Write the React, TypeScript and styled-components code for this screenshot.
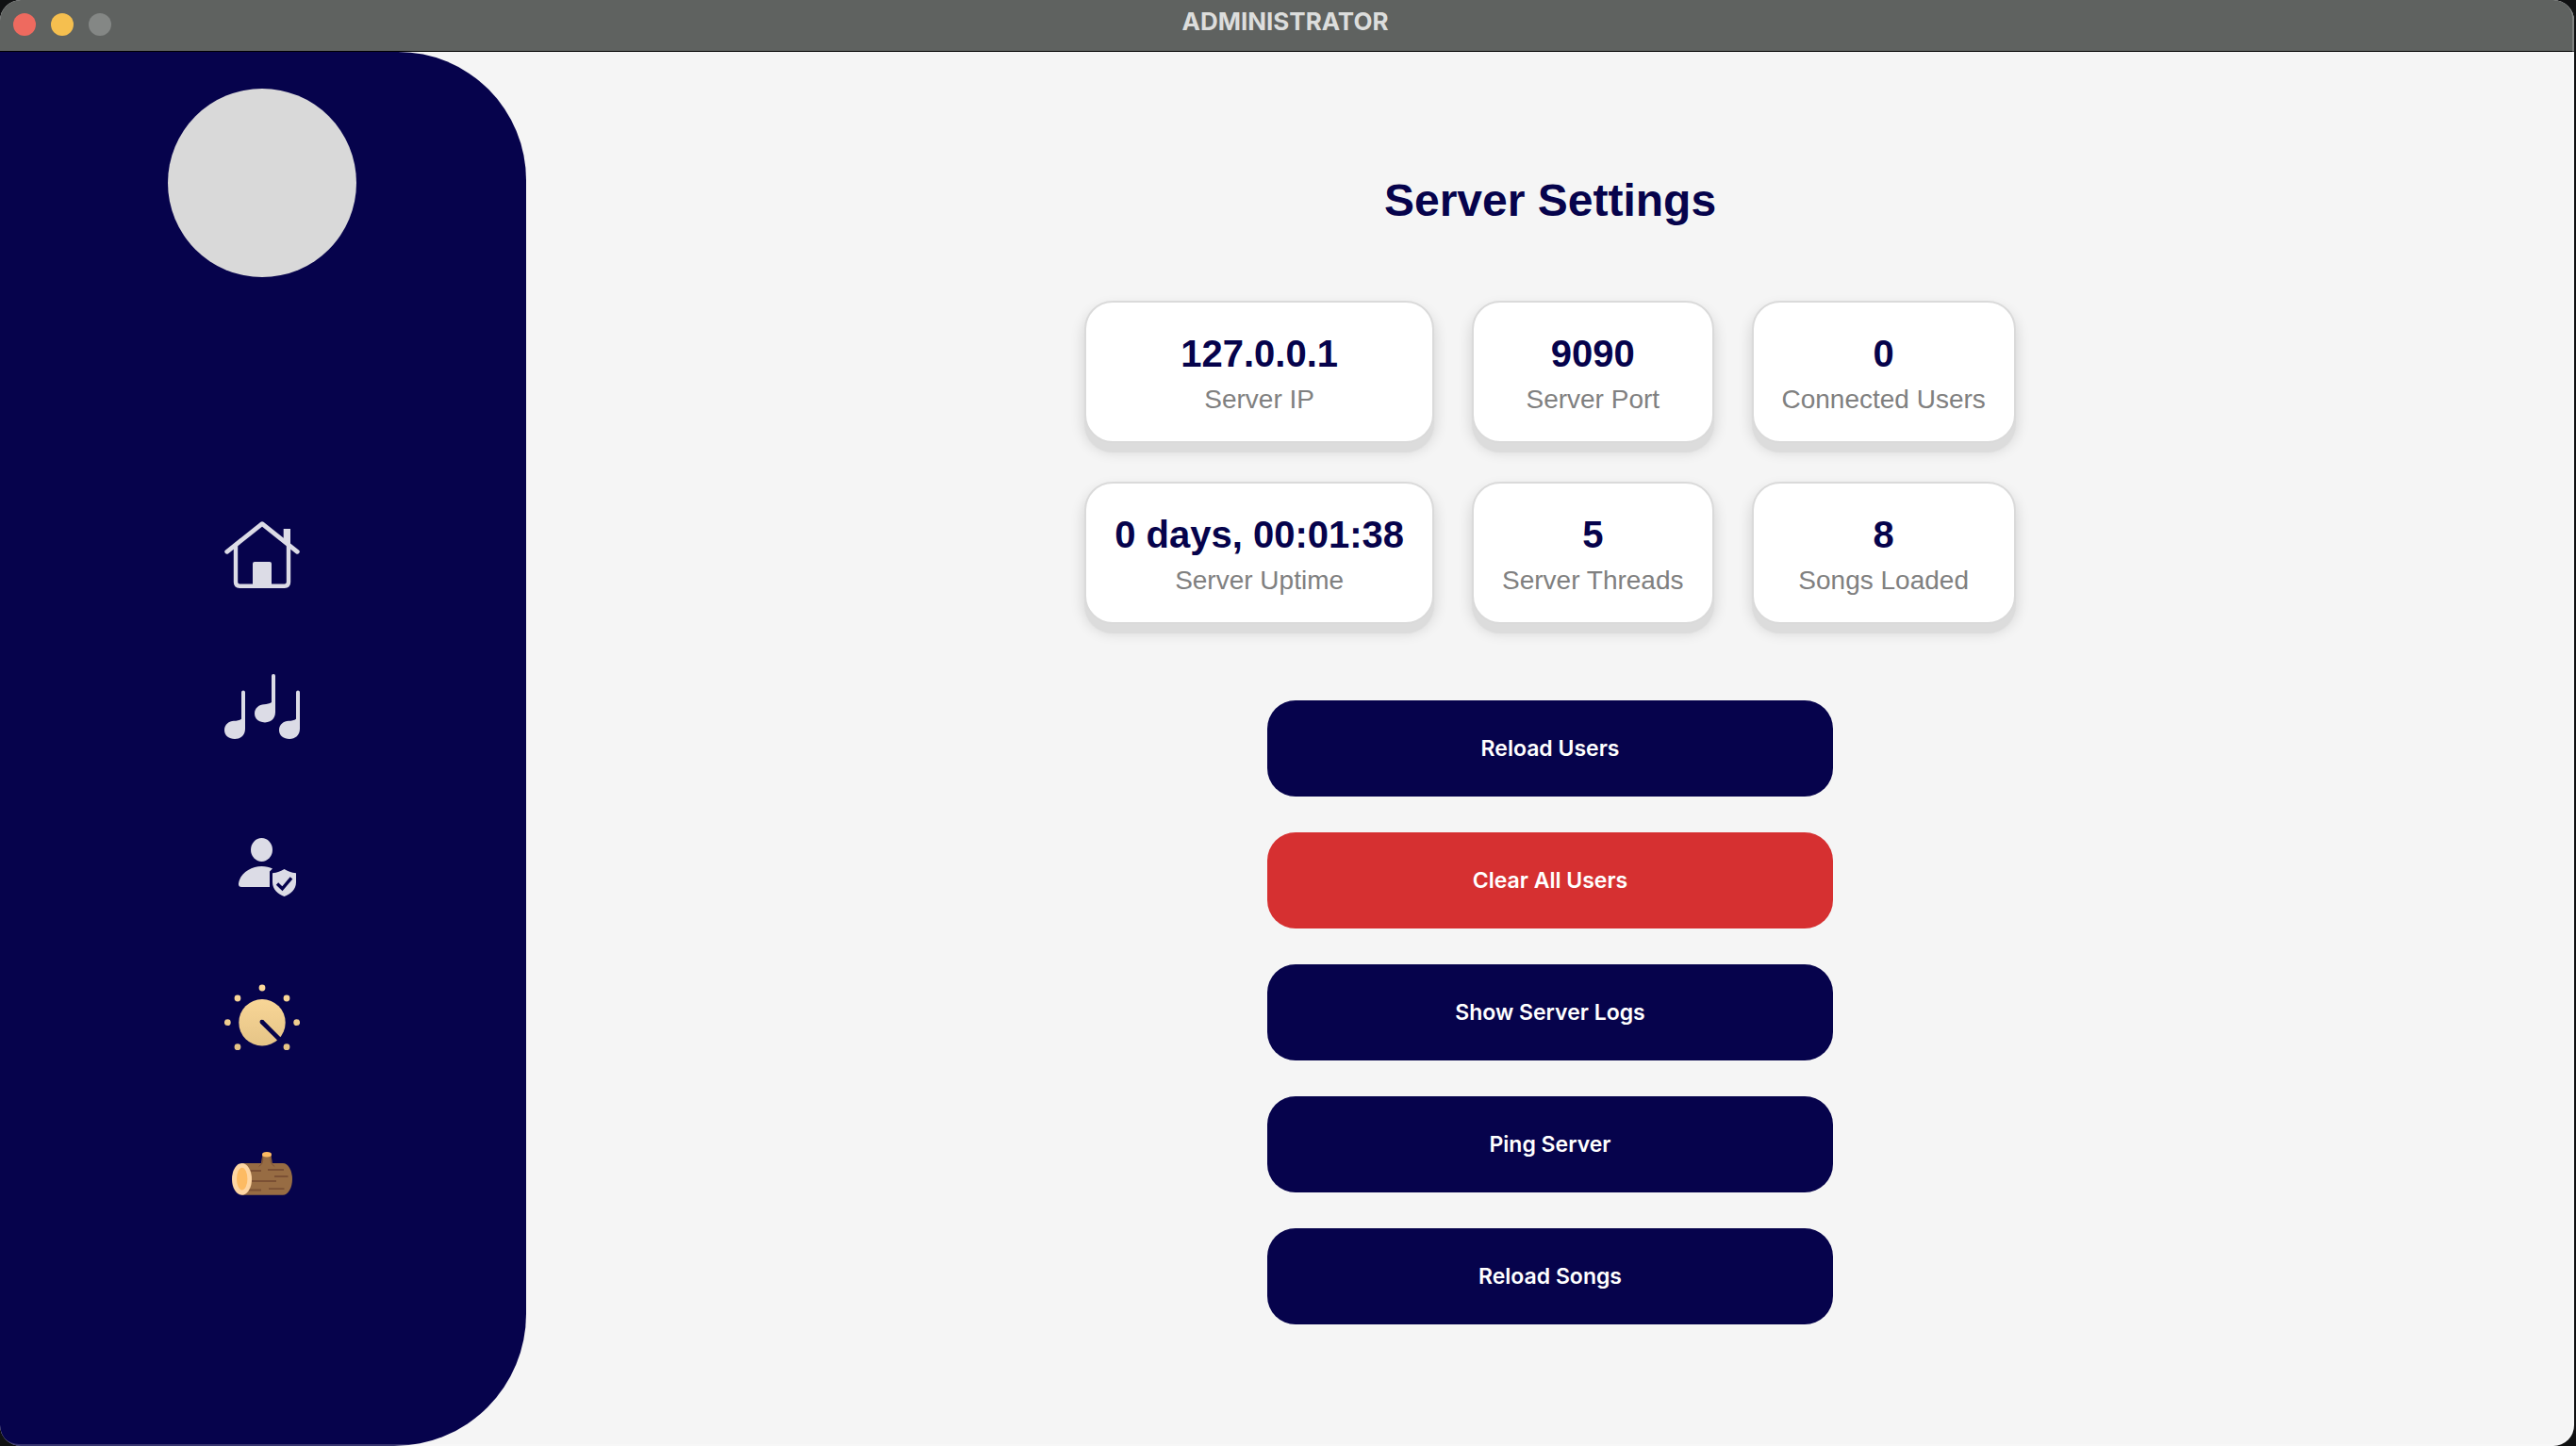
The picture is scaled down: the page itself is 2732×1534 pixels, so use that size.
import React from "react";
import styled, { createGlobalStyle } from "styled-components";

const navy = "#06034c";
const iconTint = "#dcdce6";
const arial = '"Liberation Sans", Arial, sans-serif';
const system = 'Inter, "Liberation Sans", sans-serif';

const GlobalStyle = createGlobalStyle`
  *, *::before, *::after { box-sizing: border-box; }
  body { margin: 0; background: #101112; font-family: ${arial}; }
`;

const Window = styled.div`
  position: relative;
  display: flex;
  flex-direction: column;
  min-height: 100vh;
  margin-right: 2px;
  border-radius: 22px;
  overflow: hidden;
  background: #f5f5f5;

  /* light rim along the window frame */
  &::after {
    content: "";
    position: absolute;
    inset: 0;
    border-radius: inherit;
    box-shadow: inset -2px -2px 0 rgba(255, 255, 255, 0.2);
    pointer-events: none;
  }
`;

const TitleBar = styled.header`
  display: grid;
  grid-template-columns: 1fr auto 1fr;
  align-items: center;
  height: 55px;
  padding: 0 18px 4px 14px;
  background: #5f6260;
  border-bottom: 1px solid #000;
`;

const Lights = styled.div`
  display: flex;
  gap: 16px;
  padding-top: 2px;
`;

const Light = styled.button<{ $color: string }>`
  width: 24px;
  height: 24px;
  padding: 0;
  border: 0;
  border-radius: 50%;
  background: ${(p) => p.$color};
`;

const WindowTitle = styled.span`
  padding-bottom: 4px;
  color: #dcdddc;
  font: 700 26px/32px ${system};
`;

const Body = styled.div`
  flex: 1;
  display: flex;
`;

const Sidebar = styled.aside`
  display: flex;
  flex-direction: column;
  align-items: center;
  flex: 0 0 558px;
  padding: 39px 2px 0 0;
  background: ${navy};
  border-radius: 0 136px 140px 0;
`;

const Avatar = styled.div`
  width: 200px;
  height: 200px;
  border-radius: 50%;
  background: #d9d9d9;
`;

const Nav = styled.nav`
  flex: 1;
  display: flex;
  flex-direction: column;
  justify-content: center;
  gap: 85px;
  padding-top: 8px;
`;

const NavButton = styled.button`
  width: 80px;
  height: 80px;
  padding: 0;
  border: 0;
  background: none;
  cursor: pointer;

  svg { display: block; }
`;

const Main = styled.main`
  flex: 1;
  display: flex;
  flex-direction: column;
  align-items: center;
  justify-content: center;
  gap: 78px;
`;

const Heading = styled.h1`
  margin: 0;
  padding-top: 1px;
  color: ${navy};
  font: 700 48px/56px ${arial};
`;

const Stats = styled.dl`
  display: grid;
  grid-template-columns: repeat(3, auto);
  gap: 41px 40px;
  margin: 0;
`;

const Card = styled.div`
  display: flex;
  flex-direction: column-reverse;
  gap: 6px;
  padding: 29px 30px 26px;
  text-align: center;
  background: #fff;
  border: 2px solid #dadada;
  border-radius: 30px;
  box-shadow: 0 10px 1px #dcdcdc, 0 8px 14px 2px rgba(0, 0, 0, 0.12);
`;

const Label = styled.dt`
  color: #808080;
  font-size: 28px;
  line-height: 36px;
`;

const Value = styled.dd`
  margin: 0;
  color: ${navy};
  font-size: 40px;
  font-weight: 700;
  line-height: 50px;
`;

const Actions = styled.div`
  display: flex;
  flex-direction: column;
  gap: 38px;
  width: 600px;
  margin-top: 3px;
`;

const Action = styled.button<{ $danger?: boolean }>`
  height: 102px;
  border: 0;
  border-radius: 30px;
  background: ${(p) => (p.$danger ? "#d63031" : navy)};
  color: #fff;
  font: 600 23px/32px ${system};
  cursor: pointer;
`;

const Icon = ({ children }: { children: React.ReactNode }) => (
  <svg width="80" height="80" viewBox="0 0 80 80" fill="none" aria-hidden="true">
    {children}
  </svg>
);

const HomeIcon = () => (
  <Icon>
    <g stroke={iconTint} strokeLinecap="round" strokeLinejoin="round">
      <path d="M2.7 37.3 40 7.6l37.3 29.7" strokeWidth="4.8" />
      <path d="M12 31v38.5q0 4.2 4.2 4.2h47.6q4.2 0 4.2-4.2V31" strokeWidth="4.4" />
    </g>
    <path d="M62.7 13H70v18l-7.3-6z" fill={iconTint} />
    <path d="M30 74V50q0-2 2-2h16q2 0 2 2v24z" fill={iconTint} />
  </Icon>
);

const note =
  "M22 21.5V60C22 67 17 71 11 71S0 67.5 0 61.5 5 52 10 51.8c3-.1 6-.6 8-2.1V21.5a2 2 0 0 1 4 0z";

const SongsIcon = () => (
  <Icon>
    <g fill={iconTint}>
      <path d={note} />
      <path d={note} transform="translate(32 -17.6)" />
      <path d={note} transform="translate(58 0)" />
    </g>
  </Icon>
);

const UsersIcon = () => (
  <Icon>
    <g fill={iconTint}>
      <ellipse cx="39.5" cy="23.5" rx="11.5" ry="12.5" />
      <path d="M18 63c-2 0-3.2-1.5-3-3.5C16 49 28 41 39.5 41c4.5 0 8.5 1 11.5 2.5l-3 3V63z" />
      <path d="M63.5 44c3.5 2.3 7.5 3.8 12.5 4.3V58c0 8-6 12.500-12.500 15C57 70.500 51 66 51 58v-9.700c5-.5 9-2 12.500-4.300z" />
    </g>
    <path d="M56 59.500 61.400 64.800 71 53.300" stroke={navy} strokeWidth="3.4" />
  </Icon>
);

const dots = [
  [40, 5], [14, 16], [66, 16], [3.3, 41.7], [76.7, 41.7], [14, 67.7], [66, 67.7],
];

const DialIcon = () => (
  <Icon>
    <defs>
      <linearGradient id="dial" x1="0" y1="0" x2="0" y2="72" gradientUnits="userSpaceOnUse">
        <stop offset="0" stopColor="#ffdc9c" />
        <stop offset="1" stopColor="#e3c285" />
      </linearGradient>
    </defs>
    <g fill="url(#dial)">
      <circle cx="40" cy="41.7" r="24.7" />
      {dots.map(([x, y]) => (
        <circle key={`${x}-${y}`} cx={x} cy={y} r="3.4" />
      ))}
    </g>
    <path d="M39.8 41 60 61.2" stroke={navy} strokeWidth="4.6" />
    <circle cx="39.8" cy="41" r="2.3" fill={navy} />
  </Icon>
);

const LogIcon = () => (
  <Icon>
    <path d="M18.5 26H39l1.3-9h9.2l1.3 9H62a10 16.9 0 0 1 0 33.8H18.5z" fill="#976c43" />
    <g stroke="#7b5034">
      <path d="M40.6 19v4.5q0 3.5-4 6M49.2 19v4.5q0 3.5 4 6" strokeWidth="1" />
      <path
        d="M26 34h13M46 33h17M53 40h14.5M29 45h26M26 54.500h13M47 53.200h16.500"
        strokeWidth="1.8"
      />
    </g>
    <ellipse cx="45" cy="16.8" rx="5" ry="2.7" fill="#fdbb63" />
    <ellipse cx="18.5" cy="42.9" rx="10.5" ry="16.9" fill="#fed6a3" />
    <ellipse cx="18.7" cy="42.7" rx="5.7" ry="11.9" fill="#fdbb63" />
  </Icon>
);

const navItems = [
  { name: "Home", Glyph: HomeIcon },
  { name: "Songs", Glyph: SongsIcon },
  { name: "Users", Glyph: UsersIcon },
  { name: "Server settings", Glyph: DialIcon },
  { name: "Logs", Glyph: LogIcon },
];

const stats = [
  ["Server IP", "127.0.0.1"],
  ["Server Port", "9090"],
  ["Connected Users", "0"],
  ["Server Uptime", "0 days, 00:01:38"],
  ["Server Threads", "5"],
  ["Songs Loaded", "8"],
];

const actions = [
  { label: "Reload Users" },
  { label: "Clear All Users", danger: true },
  { label: "Show Server Logs" },
  { label: "Ping Server" },
  { label: "Reload Songs" },
];

export default function App() {
  return (
    <>
      <GlobalStyle />
      <Window>
        <TitleBar>
          <Lights>
            <Light $color="#ee6a5f" aria-label="Close" />
            <Light $color="#f5bf4f" aria-label="Minimize" />
            <Light $color="#848785" aria-label="Zoom" disabled />
          </Lights>
          <WindowTitle>ADMINISTRATOR</WindowTitle>
        </TitleBar>
        <Body>
          <Sidebar>
            <Avatar />
            <Nav>
              {navItems.map(({ name, Glyph }) => (
                <NavButton key={name} aria-label={name}>
                  <Glyph />
                </NavButton>
              ))}
            </Nav>
          </Sidebar>
          <Main>
            <Heading>Server Settings</Heading>
            <Stats>
              {stats.map(([label, value]) => (
                <Card key={label}>
                  <Label>{label}</Label>
                  <Value>{value}</Value>
                </Card>
              ))}
            </Stats>
            <Actions>
              {actions.map(({ label, danger }) => (
                <Action key={label} $danger={danger}>
                  {label}
                </Action>
              ))}
            </Actions>
          </Main>
        </Body>
      </Window>
    </>
  );
}
